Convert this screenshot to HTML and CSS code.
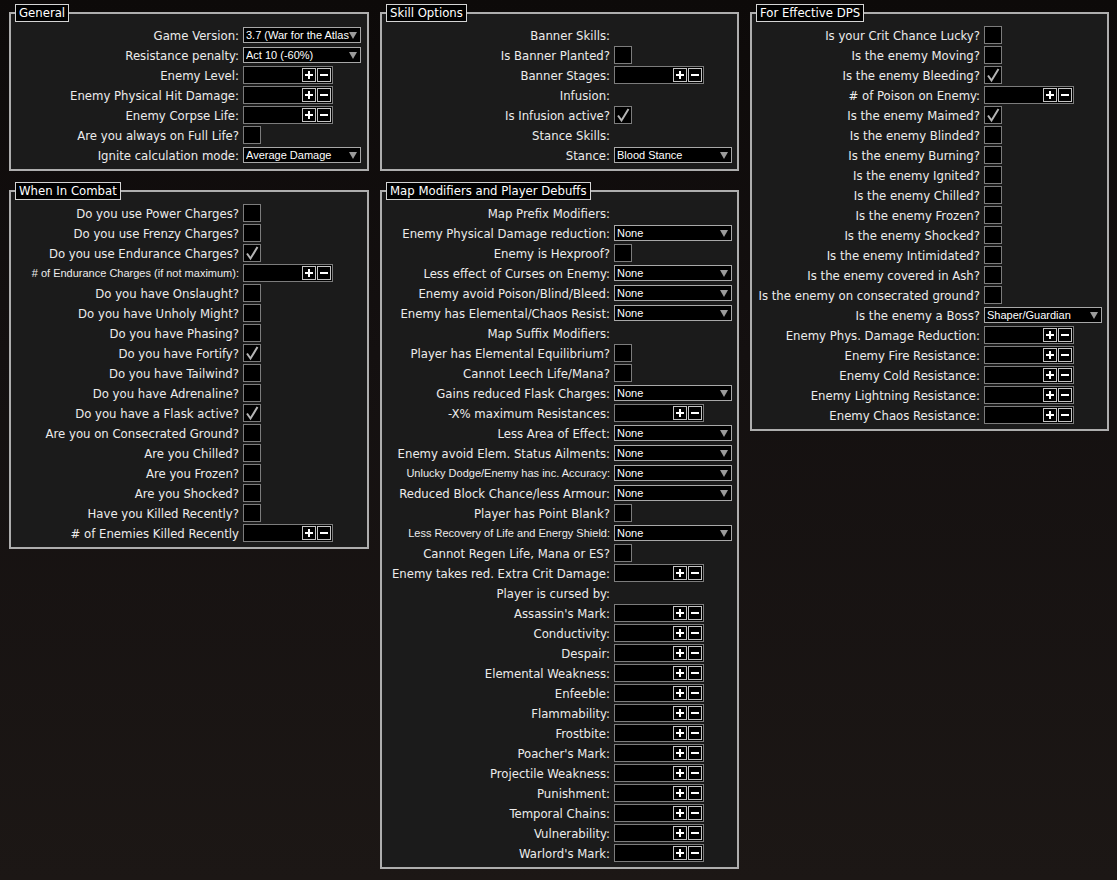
FILE: index.html
```html
<!DOCTYPE html>
<html lang="en">
<head>
  <meta charset="UTF-8" />
  <title>Configuration</title>
  <meta name="viewport" content="width=device-width, initial-scale=1.0" />
  <link rel="stylesheet" href="styles.css">
</head>
<body>
<div class="page">

  <div class="column">
    <div class="panel">
      <div class="panel-title">General</div>
      <div class="row"><span class="label">Game Version:</span><span class="dd"><span class="dd-text">3.7 (War for the Atlas</span><i class="arrow"></i></span></div>
      <div class="row"><span class="label">Resistance penalty:</span><span class="dd"><span class="dd-text">Act 10 (-60%)</span><i class="arrow"></i></span></div>
      <div class="row"><span class="label">Enemy Level:</span><span class="num"><i class="btn plus"></i><i class="btn minus"></i></span></div>
      <div class="row"><span class="label">Enemy Physical Hit Damage:</span><span class="num"><i class="btn plus"></i><i class="btn minus"></i></span></div>
      <div class="row"><span class="label">Enemy Corpse Life:</span><span class="num"><i class="btn plus"></i><i class="btn minus"></i></span></div>
      <div class="row"><span class="label">Are you always on Full Life?</span><span class="check"></span></div>
      <div class="row"><span class="label">Ignite calculation mode:</span><span class="dd"><span class="dd-text">Average Damage</span><i class="arrow"></i></span></div>
    </div>

    <div class="panel">
      <div class="panel-title">When In Combat</div>
      <div class="row"><span class="label">Do you use Power Charges?</span><span class="check"></span></div>
      <div class="row"><span class="label">Do you use Frenzy Charges?</span><span class="check"></span></div>
      <div class="row"><span class="label">Do you use Endurance Charges?</span><span class="check"><svg viewBox="0 0 16 16"><path d="M3 8.5 L6.5 13.5 L13.5 2" /></svg></span></div>
      <div class="row"><span class="label small">&#35; of Endurance Charges (if not maximum):</span><span class="num"><i class="btn plus"></i><i class="btn minus"></i></span></div>
      <div class="row"><span class="label">Do you have Onslaught?</span><span class="check"></span></div>
      <div class="row"><span class="label">Do you have Unholy Might?</span><span class="check"></span></div>
      <div class="row"><span class="label">Do you have Phasing?</span><span class="check"></span></div>
      <div class="row"><span class="label">Do you have Fortify?</span><span class="check"><svg viewBox="0 0 16 16"><path d="M3 8.5 L6.5 13.5 L13.5 2" /></svg></span></div>
      <div class="row"><span class="label">Do you have Tailwind?</span><span class="check"></span></div>
      <div class="row"><span class="label">Do you have Adrenaline?</span><span class="check"></span></div>
      <div class="row"><span class="label">Do you have a Flask active?</span><span class="check"><svg viewBox="0 0 16 16"><path d="M3 8.5 L6.5 13.5 L13.5 2" /></svg></span></div>
      <div class="row"><span class="label">Are you on Consecrated Ground?</span><span class="check"></span></div>
      <div class="row"><span class="label">Are you Chilled?</span><span class="check"></span></div>
      <div class="row"><span class="label">Are you Frozen?</span><span class="check"></span></div>
      <div class="row"><span class="label">Are you Shocked?</span><span class="check"></span></div>
      <div class="row"><span class="label">Have you Killed Recently?</span><span class="check"></span></div>
      <div class="row"><span class="label">&#35; of Enemies Killed Recently</span><span class="num"><i class="btn plus"></i><i class="btn minus"></i></span></div>
    </div>
  </div>

  <div class="column">
    <div class="panel">
      <div class="panel-title">Skill Options</div>
      <div class="row"><span class="label">Banner Skills:</span></div>
      <div class="row"><span class="label">Is Banner Planted?</span><span class="check"></span></div>
      <div class="row"><span class="label">Banner Stages:</span><span class="num"><i class="btn plus"></i><i class="btn minus"></i></span></div>
      <div class="row"><span class="label">Infusion:</span></div>
      <div class="row"><span class="label">Is Infusion active?</span><span class="check"><svg viewBox="0 0 16 16"><path d="M3 8.5 L6.5 13.5 L13.5 2" /></svg></span></div>
      <div class="row"><span class="label">Stance Skills:</span></div>
      <div class="row"><span class="label">Stance:</span><span class="dd"><span class="dd-text">Blood Stance</span><i class="arrow"></i></span></div>
    </div>

    <div class="panel">
      <div class="panel-title">Map Modifiers and Player Debuffs</div>
      <div class="row"><span class="label">Map Prefix Modifiers:</span></div>
      <div class="row"><span class="label">Enemy Physical Damage reduction:</span><span class="dd"><span class="dd-text">None</span><i class="arrow"></i></span></div>
      <div class="row"><span class="label">Enemy is Hexproof?</span><span class="check"></span></div>
      <div class="row"><span class="label">Less effect of Curses on Enemy:</span><span class="dd"><span class="dd-text">None</span><i class="arrow"></i></span></div>
      <div class="row"><span class="label">Enemy avoid Poison/Blind/Bleed:</span><span class="dd"><span class="dd-text">None</span><i class="arrow"></i></span></div>
      <div class="row"><span class="label">Enemy has Elemental/Chaos Resist:</span><span class="dd"><span class="dd-text">None</span><i class="arrow"></i></span></div>
      <div class="row"><span class="label">Map Suffix Modifiers:</span></div>
      <div class="row"><span class="label">Player has Elemental Equilibrium?</span><span class="check"></span></div>
      <div class="row"><span class="label">Cannot Leech Life/Mana?</span><span class="check"></span></div>
      <div class="row"><span class="label">Gains reduced Flask Charges:</span><span class="dd"><span class="dd-text">None</span><i class="arrow"></i></span></div>
      <div class="row"><span class="label">-X% maximum Resistances:</span><span class="num"><i class="btn plus"></i><i class="btn minus"></i></span></div>
      <div class="row"><span class="label">Less Area of Effect:</span><span class="dd"><span class="dd-text">None</span><i class="arrow"></i></span></div>
      <div class="row"><span class="label">Enemy avoid Elem. Status Ailments:</span><span class="dd"><span class="dd-text">None</span><i class="arrow"></i></span></div>
      <div class="row"><span class="label small">Unlucky Dodge/Enemy has inc. Accuracy:</span><span class="dd"><span class="dd-text">None</span><i class="arrow"></i></span></div>
      <div class="row"><span class="label">Reduced Block Chance/less Armour:</span><span class="dd"><span class="dd-text">None</span><i class="arrow"></i></span></div>
      <div class="row"><span class="label">Player has Point Blank?</span><span class="check"></span></div>
      <div class="row"><span class="label small">Less Recovery of Life and Energy Shield:</span><span class="dd"><span class="dd-text">None</span><i class="arrow"></i></span></div>
      <div class="row"><span class="label">Cannot Regen Life, Mana or ES?</span><span class="check"></span></div>
      <div class="row"><span class="label">Enemy takes red. Extra Crit Damage:</span><span class="num"><i class="btn plus"></i><i class="btn minus"></i></span></div>
      <div class="row"><span class="label">Player is cursed by:</span></div>
      <div class="row"><span class="label">Assassin's Mark:</span><span class="num"><i class="btn plus"></i><i class="btn minus"></i></span></div>
      <div class="row"><span class="label">Conductivity:</span><span class="num"><i class="btn plus"></i><i class="btn minus"></i></span></div>
      <div class="row"><span class="label">Despair:</span><span class="num"><i class="btn plus"></i><i class="btn minus"></i></span></div>
      <div class="row"><span class="label">Elemental Weakness:</span><span class="num"><i class="btn plus"></i><i class="btn minus"></i></span></div>
      <div class="row"><span class="label">Enfeeble:</span><span class="num"><i class="btn plus"></i><i class="btn minus"></i></span></div>
      <div class="row"><span class="label">Flammability:</span><span class="num"><i class="btn plus"></i><i class="btn minus"></i></span></div>
      <div class="row"><span class="label">Frostbite:</span><span class="num"><i class="btn plus"></i><i class="btn minus"></i></span></div>
      <div class="row"><span class="label">Poacher's Mark:</span><span class="num"><i class="btn plus"></i><i class="btn minus"></i></span></div>
      <div class="row"><span class="label">Projectile Weakness:</span><span class="num"><i class="btn plus"></i><i class="btn minus"></i></span></div>
      <div class="row"><span class="label">Punishment:</span><span class="num"><i class="btn plus"></i><i class="btn minus"></i></span></div>
      <div class="row"><span class="label">Temporal Chains:</span><span class="num"><i class="btn plus"></i><i class="btn minus"></i></span></div>
      <div class="row"><span class="label">Vulnerability:</span><span class="num"><i class="btn plus"></i><i class="btn minus"></i></span></div>
      <div class="row"><span class="label">Warlord's Mark:</span><span class="num"><i class="btn plus"></i><i class="btn minus"></i></span></div>
    </div>
  </div>

  <div class="column">
    <div class="panel">
      <div class="panel-title">For Effective DPS</div>
      <div class="row"><span class="label">Is your Crit Chance Lucky?</span><span class="check"></span></div>
      <div class="row"><span class="label">Is the enemy Moving?</span><span class="check"></span></div>
      <div class="row"><span class="label">Is the enemy Bleeding?</span><span class="check"><svg viewBox="0 0 16 16"><path d="M3 8.5 L6.5 13.5 L13.5 2" /></svg></span></div>
      <div class="row"><span class="label">&#35; of Poison on Enemy:</span><span class="num"><i class="btn plus"></i><i class="btn minus"></i></span></div>
      <div class="row"><span class="label">Is the enemy Maimed?</span><span class="check"><svg viewBox="0 0 16 16"><path d="M3 8.5 L6.5 13.5 L13.5 2" /></svg></span></div>
      <div class="row"><span class="label">Is the enemy Blinded?</span><span class="check"></span></div>
      <div class="row"><span class="label">Is the enemy Burning?</span><span class="check"></span></div>
      <div class="row"><span class="label">Is the enemy Ignited?</span><span class="check"></span></div>
      <div class="row"><span class="label">Is the enemy Chilled?</span><span class="check"></span></div>
      <div class="row"><span class="label">Is the enemy Frozen?</span><span class="check"></span></div>
      <div class="row"><span class="label">Is the enemy Shocked?</span><span class="check"></span></div>
      <div class="row"><span class="label">Is the enemy Intimidated?</span><span class="check"></span></div>
      <div class="row"><span class="label">Is the enemy covered in Ash?</span><span class="check"></span></div>
      <div class="row"><span class="label">Is the enemy on consecrated ground?</span><span class="check"></span></div>
      <div class="row"><span class="label">Is the enemy a Boss?</span><span class="dd"><span class="dd-text">Shaper/Guardian</span><i class="arrow"></i></span></div>
      <div class="row"><span class="label">Enemy Phys. Damage Reduction:</span><span class="num"><i class="btn plus"></i><i class="btn minus"></i></span></div>
      <div class="row"><span class="label">Enemy Fire Resistance:</span><span class="num"><i class="btn plus"></i><i class="btn minus"></i></span></div>
      <div class="row"><span class="label">Enemy Cold Resistance:</span><span class="num"><i class="btn plus"></i><i class="btn minus"></i></span></div>
      <div class="row"><span class="label">Enemy Lightning Resistance:</span><span class="num"><i class="btn plus"></i><i class="btn minus"></i></span></div>
      <div class="row"><span class="label">Enemy Chaos Resistance:</span><span class="num"><i class="btn plus"></i><i class="btn minus"></i></span></div>
    </div>
  </div>

</div>
</body>
</html>
```

FILE: styles.css
```css
html, body {
  margin: 0;
  height: 100%;
}

body {
  font-family: "DejaVu Sans Condensed", "DejaVu Sans", sans-serif;
  font-size: 13px;
  color: #ececec;
  background: linear-gradient(#0d0a09, #141010 40%, #1c1715);
  overflow: hidden;
}

.page {
  display: grid;
  grid-template-columns: 360px 359px 359px;
  column-gap: 11px;
  align-items: start;
  padding: 12px 0 0 9px;
}

.column {
  display: flex;
  flex-direction: column;
  gap: 19px;
}

.panel {
  position: relative;
  border: 2px solid #aeaeae;
  background: #1b1b1b;
  padding: 11px 0 4px;
}

.panel-title {
  position: absolute;
  top: -10px;
  left: 4px;
  height: 18px;
  box-sizing: border-box;
  padding: 0 3px;
  border: 1px solid #d4d4d4;
  background: #000;
  color: #fff;
  line-height: 16px;
  white-space: nowrap;
}

.row {
  display: flex;
  align-items: center;
  gap: 4px;
  height: 20px;
}

.label {
  flex: none;
  width: 228px;
  text-align: right;
  white-space: nowrap;
}

.label.small {
  font-family: "Liberation Sans", Arial, sans-serif;
  font-size: 11px;
}

/* dropdown */
.dd {
  display: flex;
  align-items: center;
  width: 118px;
  height: 16px;
  box-sizing: border-box;
  border: 1px solid #a8a8a8;
  background: #000;
  padding: 0 3px 0 2px;
  font-family: "Liberation Sans", Arial, sans-serif;
  font-size: 11px;
  color: #fff;
}

.dd-text {
  flex: 1;
  overflow: hidden;
  white-space: nowrap;
  margin-right: -6px;
}

.arrow {
  flex: none;
  width: 0;
  height: 0;
  border-left: 4px solid transparent;
  border-right: 4px solid transparent;
  border-top: 7px solid #9a9a9a;
}

/* number field with +/- */
.num {
  display: flex;
  align-items: center;
  justify-content: flex-end;
  gap: 1px;
  width: 90px;
  height: 18px;
  box-sizing: border-box;
  border: 1px solid #7c7c7c;
  background: #000;
  padding-right: 1px;
}

.btn {
  width: 14px;
  height: 14px;
  box-sizing: border-box;
  border: 1px solid #c4c4c4;
  background-color: #000;
}

.btn.plus {
  background: linear-gradient(#fff, #fff) center / 8px 2px no-repeat,
              linear-gradient(#fff, #fff) center / 2px 8px no-repeat,
              #000;
}

.btn.minus {
  background: linear-gradient(#fff, #fff) center / 8px 2px no-repeat, #000;
}

/* checkbox */
.check {
  display: flex;
  align-items: center;
  justify-content: center;
  width: 18px;
  height: 18px;
  box-sizing: border-box;
  border: 1px solid #7c7c7c;
  background: #000;
}

.check svg {
  width: 16px;
  height: 16px;
}

.check path {
  fill: none;
  stroke: #b4b4b4;
  stroke-width: 2;
}
```
